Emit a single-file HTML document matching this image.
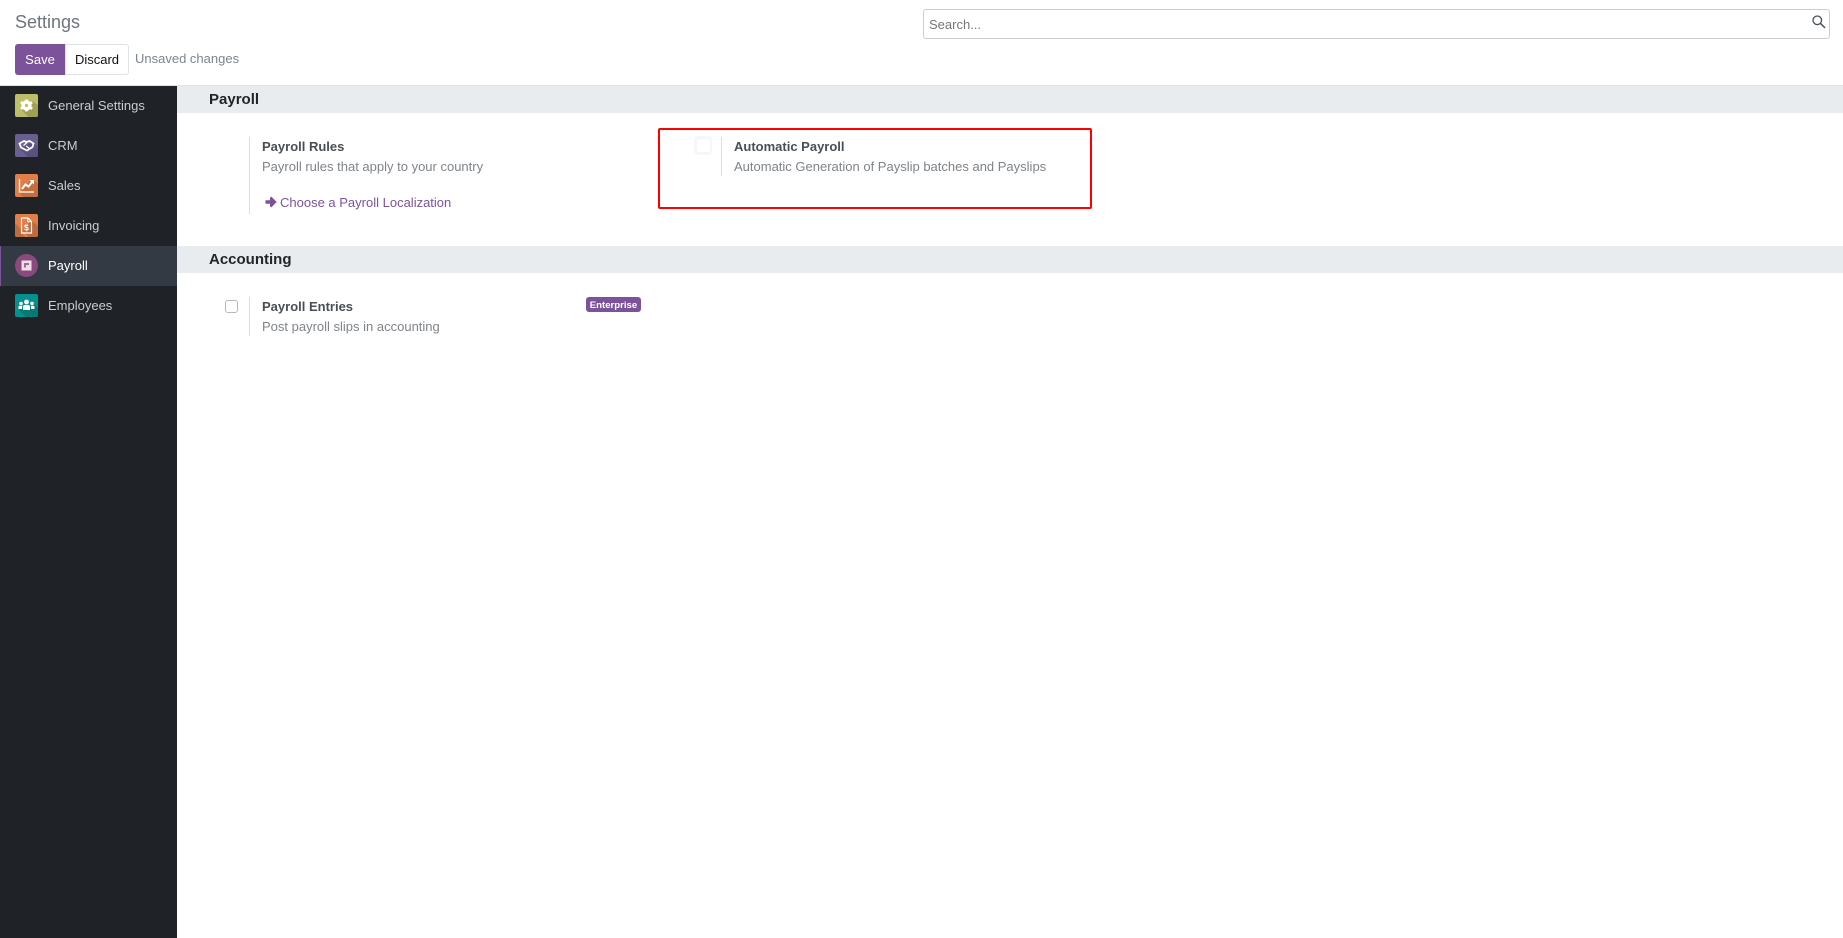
<!DOCTYPE html>
<html lang="en"><head><meta charset="utf-8"><title>Settings</title>
<style>
*{box-sizing:border-box}
html,body{margin:0;padding:0;width:1843px;height:938px;overflow:hidden;background:#fff;font-family:"Liberation Sans",sans-serif;font-size:13px;color:#4c4c4c}
.a{position:absolute;white-space:nowrap}
#top{position:absolute;left:0;top:0;width:1843px;height:86px;background:#fff;border-bottom:1px solid #dee2e6}
#side{position:absolute;left:0;top:86px;width:177px;height:852px;background:#1f2327}
.it{position:absolute;left:0;width:177px;height:40px}
.it .ic{position:absolute;left:15px;top:8px;width:23px;height:23px;border-radius:2px;overflow:hidden}
.it .t{position:absolute;left:48px;top:0;line-height:40px;font-size:13px;color:#c9ccd0}
.sec{position:absolute;left:177px;width:1666px;background:#e9ecef;color:#212529;font-weight:bold;font-size:15px;padding-left:32px}
.ttl{font-weight:bold;font-size:13px;color:#4a4f55}
.dsc{font-size:13px;color:#7f8489}
.vl{position:absolute;width:1px;background:#dcdfe2}
</style></head><body>
<div id="top">
<div class="a" style="left:15px;top:11px;font-size:18px;line-height:22px;color:#6c757d">Settings</div>
<div class="a" style="left:15px;top:44px;width:50px;height:31px;background:#7c539a;color:#fff;border-radius:3px 0 0 3px;text-align:center;line-height:31px;font-size:13px">Save</div>
<div class="a" style="left:65px;top:44px;width:64px;height:31px;background:#fff;color:#111;border:1px solid #dee2e6;border-radius:0 3px 3px 0;text-align:center;line-height:29px;font-size:13px">Discard</div>
<div class="a" style="left:135px;top:51px;font-size:13px;line-height:16px;color:#7c8590">Unsaved changes</div>
<div class="a" style="left:923px;top:9px;width:907px;height:30px;border:1px solid #ccc;border-radius:3px;background:#fff">
<div class="a" style="left:5px;top:6px;font-size:13px;line-height:18px;color:#777">Search...</div>
<svg class="a" style="left:888px;top:5px" width="14" height="14" viewBox="0 0 14 14"><circle cx="5.300" cy="5.300" r="4.300" fill="none" stroke="#495057" stroke-width="1.300"/><path d="M8.500 8.500L13 12.800" stroke="#495057" stroke-width="1.500"/></svg>
</div>
</div>
<div id="side">
<div class="it" style="top:0"><div class="ic" style="background:#bdbe68"><svg width="23" height="23" viewBox="0 0 23 23"><path d="M5.500 15L13.500 23H23V11L16.500 6.500Z" fill="#a0a157"/><circle cx="11.500" cy="11.500" r="3.700" fill="none" stroke="#fff" stroke-width="3"/><path d="M11.500 5.500V17.500M5.800 8.200L17.200 14.800M17.200 8.200L5.800 14.800" stroke="#fff" stroke-width="2.600"/><circle cx="11.500" cy="11.500" r="1.600" fill="#bdbe68"/></svg></div><div class="t">General Settings</div></div>
<div class="it" style="top:40px"><div class="ic" style="background:#6a6090"><svg width="23" height="23" viewBox="0 0 23 23"><path d="M5 15L13 23H23V13L18 8Z" fill="#5a5180"/><path d="M4.500 9.500L9 7L11.500 8L14.500 7L18.500 9.500L17.500 13L12 16.500L6 13.500Z" fill="none" stroke="#fff" stroke-width="1.800"/><path d="M8.500 11.500L12 8.500M11 12L14.500 14.500" stroke="#fff" stroke-width="1.200"/></svg></div><div class="t">CRM</div></div>
<div class="it" style="top:80px"><div class="ic" style="background:#e07f48"><svg width="23" height="23" viewBox="0 0 23 23"><path d="M4 19L8 23H23V10L17 5Z" fill="#c46e3d"/><path d="M4.500 5V18H19" fill="none" stroke="#fff" stroke-width="1.300"/><path d="M7 15L10.500 10.500L13.500 12.500L17.500 7.500" fill="none" stroke="#fff" stroke-width="2"/><path d="M14.500 6H19V10.500Z" fill="#fff"/></svg></div><div class="t">Sales</div></div>
<div class="it" style="top:120px"><div class="ic" style="background:#e07f48"><svg width="23" height="23" viewBox="0 0 23 23"><path d="M0 9L14 23H0ZM6 19L10 23H23V12L16 6Z" fill="#bc6c3e"/><path d="M6.500 4H13L16.500 7.500V19H6.500Z" fill="none" stroke="#fff" stroke-width="1.200"/><path d="M12.800 4V7.700H16.500" fill="none" stroke="#fff" stroke-width="1"/><text x="11.500" y="16.500" text-anchor="middle" font-size="8.500" font-weight="bold" fill="#fff" font-family="Liberation Sans">$</text></svg></div><div class="t">Invoicing</div></div>
<div class="it" style="top:160px;background:#343a43"><div class="a" style="left:0;top:0;width:1px;height:40px;background:#7c539a"></div><div class="ic" style="border-radius:50%;background:#8a4a7c"><svg width="23" height="23" viewBox="0 0 23 23"><rect x="6.500" y="6.500" width="10" height="10" fill="#ece0e8"/><path d="M9 9H14V11H11V13.500H9Z" fill="#a4698f"/></svg></div><div class="t" style="color:#fff">Payroll</div></div>
<div class="it" style="top:200px"><div class="ic" style="background:#06908d"><svg width="23" height="23" viewBox="0 0 23 23"><path d="M4 16L11 23H23V14L18 9Z" fill="#077a78"/><circle cx="11.500" cy="8" r="2.400" fill="#fff"/><circle cx="6" cy="9.500" r="1.800" fill="#fff"/><circle cx="17" cy="9.500" r="1.800" fill="#fff"/><path d="M8 16V13Q8 11 10 11H13Q15 11 15 13V16Z" fill="#fff"/><path d="M3.500 15V13Q3.500 11.800 5.200 11.800H7.200L7 15ZM19.500 15V13Q19.500 11.800 17.800 11.800H15.800L16 15Z" fill="#fff"/></svg></div><div class="t">Employees</div></div>
</div>

<div class="sec" style="top:86px;height:27px;line-height:27px">Payroll</div>
<div class="sec" style="top:246px;height:27px;line-height:27px">Accounting</div>

<div class="vl" style="left:249px;top:137px;height:77px"></div>
<div class="a ttl" style="left:262px;top:139px;line-height:16px">Payroll Rules</div>
<div class="a dsc" style="left:262px;top:159px;line-height:16px">Payroll rules that apply to your country</div>
<svg class="a" style="left:265px;top:196px" width="12" height="12" viewBox="0 0 12 12"><path d="M0.500 4.300H5V1.600L6.300 0.600L11.700 6L6.300 11.400L5 10.400V7.700H0.500Z" fill="#7c539a"/></svg>
<div class="a" style="left:280px;top:195px;line-height:16px;font-size:13px;color:#7c539a">Choose a Payroll Localization</div>

<div class="a" style="left:694px;top:136px;width:18px;height:19px;background:#f6f7f9;border-radius:4px"></div>
<div class="a" style="left:697px;top:139px;width:13px;height:13px;background:#fff;border-radius:3px"></div>
<div class="vl" style="left:721px;top:137px;height:39px"></div>
<div class="a ttl" style="left:734px;top:139px;line-height:16px">Automatic Payroll</div>
<div class="a dsc" style="left:734px;top:159px;line-height:16px">Automatic Generation of Payslip batches and Payslips</div>
<div class="a" style="left:658px;top:128px;width:434px;height:81px;border:2px solid #f00;border-radius:2px"></div>

<div class="a" style="left:225px;top:300px;width:13px;height:13px;background:#fff;border:1px solid #b5b8bb;border-radius:3px"></div>
<div class="vl" style="left:249px;top:297px;height:39px"></div>
<div class="a ttl" style="left:262px;top:299px;line-height:16px">Payroll Entries</div>
<div class="a dsc" style="left:262px;top:319px;line-height:16px">Post payroll slips in accounting</div>
<div class="a" style="left:586px;top:297px;width:55px;height:15px;background:#7c539a;border-radius:3px;color:#fff;font-weight:bold;font-size:9.600px;line-height:17px;text-align:center">Enterprise</div>
</body></html>
